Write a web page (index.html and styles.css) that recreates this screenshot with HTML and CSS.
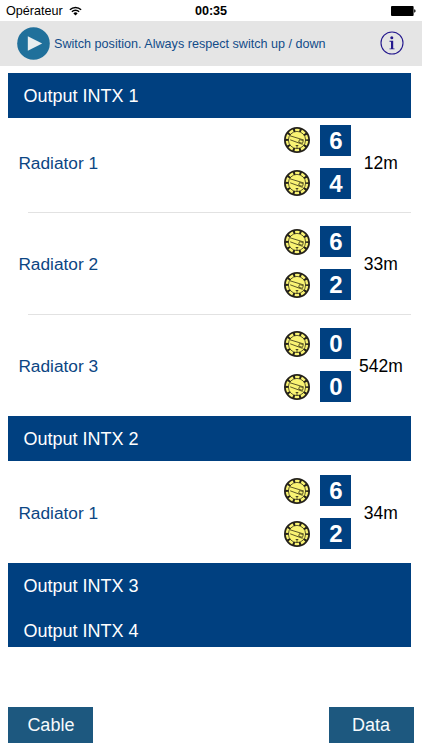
FILE: index.html
```html
<!DOCTYPE html>
<html lang="en">
<head>
<meta charset="utf-8">
<title>Switch position</title>
<link rel="stylesheet" href="styles.css">
</head>
<body>
<svg class="defs" width="0" height="0" aria-hidden="true">
  <symbol id="dial" viewBox="0 0 26 26">
    <circle cx="13" cy="13" r="12.1" fill="#f9f373" stroke="#25221b" stroke-width="1.8"/>
    <circle cx="13" cy="13" r="8.6" fill="none" stroke="#39351c" stroke-width=".8"/>
    <circle cx="13" cy="13" r="10.2" fill="none" stroke="#25221b" stroke-width="3.4" stroke-dasharray="2 4.409" stroke-dashoffset="1"/>
    <path d="M13 18.5v3.2M11.7 18.5h2.6" fill="none" stroke="#39351c" stroke-width=".9"/>
    <path d="M6 8.8 19.8 13M6.2 12.8l12.4 4.6M15.5 12.6l3.8 1-.8 2.8-3.8-1.2z" fill="none" stroke="#4b461f" stroke-width=".9"/>
  </symbol>
</svg>
<header class="status">
  <span class="carrier">Opérateur</span>
  <svg class="wifi" viewBox="0 0 13 10"><path d="M.9 3.7a8 8 0 0 1 11.2 0M2.9 5.8a5.1 5.1 0 0 1 7.2 0" fill="none" stroke="#000" stroke-width="1.5"/><path d="M6.5 9.6 4.4 7.4a3 3 0 0 1 4.2 0z"/></svg>
  <span class="time">00:35</span>
  <svg class="battery" viewBox="0 0 25 10"><rect width="22.6" height="10" rx="1"/><path d="M23.2 3.3q1.4.3 1.4 1.7t-1.4 1.7z"/></svg>
</header>
<div class="toolbar">
  <svg class="play" viewBox="0 0 33 33"><circle cx="16.5" cy="16.5" r="16.3" fill="#20709b"/><path d="M10.8 9.2v14.6l14.4-7.3z" fill="#e9eef0"/></svg>
  <span class="hint">Switch position. Always respect switch up / down</span>
  <svg class="info" viewBox="0 0 24 24"><circle cx="12" cy="12" r="11" fill="none" stroke="#24188d" stroke-width="1.1"/><circle cx="11.8" cy="6.7" r="1.5" fill="#24188d"/><path d="M9.5 9.8h3.7v7.6h1.3v.9h-5v-.9H11v-6.6H9.5z" fill="#24188d"/></svg>
</div>
<main class="list">
  <h2 class="section">Output INTX 1</h2>
  <div class="row first">
    <span class="name">Radiator 1</span>
    <div class="switches"><svg class="dial"><use href="#dial"/></svg><b>6</b><svg class="dial"><use href="#dial"/></svg><b>4</b></div>
    <span class="length">12m</span>
  </div>
  <div class="row ruled">
    <span class="name">Radiator 2</span>
    <div class="switches"><svg class="dial"><use href="#dial"/></svg><b>6</b><svg class="dial"><use href="#dial"/></svg><b>2</b></div>
    <span class="length">33m</span>
  </div>
  <div class="row ruled">
    <span class="name">Radiator 3</span>
    <div class="switches"><svg class="dial"><use href="#dial"/></svg><b>0</b><svg class="dial"><use href="#dial"/></svg><b>0</b></div>
    <span class="length">542m</span>
  </div>
  <h2 class="section">Output INTX 2</h2>
  <div class="row">
    <span class="name">Radiator 1</span>
    <div class="switches"><svg class="dial"><use href="#dial"/></svg><b>6</b><svg class="dial"><use href="#dial"/></svg><b>2</b></div>
    <span class="length">34m</span>
  </div>
  <h2 class="section">Output INTX 3</h2>
  <h2 class="section">Output INTX 4</h2>
</main>
<footer class="actions">
  <button class="action">Cable</button>
  <button class="action">Data</button>
</footer>
</body>
</html>
```
FILE: styles.css
```css
* { box-sizing: border-box; }

body {
  margin: 0;
  width: 422px;
  height: 750px;
  overflow: hidden;
  display: flex;
  flex-direction: column;
  background: #fff;
  font-family: "Liberation Sans", Arial, sans-serif;
}

svg { display: block; flex: none; }
.defs { position: absolute; }

.status {
  height: 21px;
  flex: none;
  display: grid;
  grid-template-columns: 62px 1fr 34px 1fr 62px;
  align-items: center;
  padding: 0 6px;
  font-size: 12.6px;
  line-height: 22px;
}
.wifi { width: 13px; height: 10px; margin-left: .5px; margin-top: -1px; }
.time { font-weight: bold; text-align: center; }
.battery { width: 25px; height: 10px; justify-self: end; grid-column: 5; }

.toolbar {
  height: 44.5px;
  flex: none;
  display: flex;
  align-items: center;
  padding: 0 18px 0 16.5px;
  background: #e5e5e5;
  color: #124c89;
  font-size: 12.6px;
}
.play { width: 33px; height: 33px; }
.hint { margin-left: 4.5px; padding-top: 1px; white-space: nowrap; }
.info { width: 24px; height: 24px; margin-left: auto; }

.list {
  flex: none;
  height: 574px;
  margin: 7.5px 11px 0 8.4px;
  overflow: hidden;
}

.section {
  margin: 0;
  height: 45px;
  padding-left: 15px;
  background: #004080;
  color: #fff;
  font-size: 18px;
  font-weight: normal;
  line-height: 46px;
}

.row {
  height: 102px;
  display: grid;
  grid-template-columns: 276px 67px 59px;
  align-items: center;
  background: linear-gradient(#e2e2e2, #e2e2e2) 20px 0 / 0 1px no-repeat;
}
.ruled { background-size: 383px 1px; }
.first { height: 94px; padding-bottom: 7px; }

.name { padding: 2px 0 0 10px; color: #0c4683; font-size: 17.3px; }
.first .name, .first .length { padding-top: 3px; }

.switches {
  display: grid;
  grid-template-columns: 26px 31px;
  grid-auto-rows: 31px;
  gap: 12px 10px;
  align-items: center;
}
.dial { width: 26px; height: 26px; }
.switches b {
  background: #004080;
  color: #fff;
  font-size: 24px;
  line-height: 31px;
  text-align: center;
}

.length { padding-top: 2px; font-size: 17.5px; text-align: center; }

.actions {
  margin-top: auto;
  display: flex;
  justify-content: space-between;
  padding: 0 8.4px 7.5px;
}
.action {
  width: 85px;
  height: 35.5px;
  padding: 1px 0 0;
  border: 0;
  background: #1d587f;
  color: #f6fafc;
  font: 18px "Liberation Sans", Arial, sans-serif;
}
```
